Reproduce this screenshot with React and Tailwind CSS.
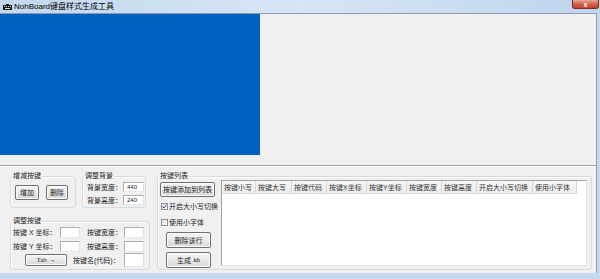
function Btn({ className = '', children }) {
  return (
    <div className={`flex items-center justify-center border border-[#707070] rounded-[2px] bg-linear-to-b from-[#f5f5f5] via-[#e8e8e8] to-[#d8d8d8] text-[7px] leading-none shadow-[inset_0_0_0_1px_#fcfcfc] ${className}`}>
      {children}
    </div>
  )
}

function Group({ title, className = '', children }) {
  return (
    <fieldset className={`border border-[#d3dce3] rounded-[3px] shadow-[inset_1px_1px_0_#fff] ${className}`}>
      <legend className="ml-[1px] px-[1px] text-[7px] leading-[8px]">{title}</legend>
      {children}
    </fieldset>
  )
}

function Input({ className = '', value }) {
  return (
    <div className={`border border-[#abadb3] border-b-[#e3e9ef] border-r-[#dbdfe6] bg-white flex items-center pl-[3px] text-[6px] font-['Liberation_Sans',sans-serif] ${className}`}>
      {value}
    </div>
  )
}

function Check({ checked, label, className = '' }) {
  return (
    <div className={`flex items-center text-[7px] leading-none ${className}`}>
      <div className="w-[7px] h-[7px] border border-[#8f8f8f] bg-linear-to-br from-[#dcdcdc] to-white flex items-center justify-center">
        {checked && (
          <svg width="5" height="5" viewBox="0 0 5 5">
            <path d="M0.5 2.5 L2 4 L4.5 0.8" fill="none" stroke="#2a4a8f" strokeWidth="1" />
          </svg>
        )}
      </div>
      <span className="ml-[1px]">{label}</span>
    </div>
  )
}

const columns = [
  ['按键小写', 34],
  ['按键大写', 36],
  ['按键代码', 35],
  ['按键X坐标', 40],
  ['按键Y坐标', 40],
  ['按键宽度', 35],
  ['按键高度', 35],
  ['开启大小写切换', 56],
  ['使用小字体', 44],
]

export default function App() {
  return (
    <div className="w-[600px] h-[279px] overflow-hidden bg-[#c4d9ef] flex flex-col font-['Liberation_Sans','Noto_Sans_CJK_SC',sans-serif] text-[#1b1b1b]">
      {/* title bar */}
      <div className="h-[13px] shrink-0 flex items-center bg-linear-to-r from-[#c2d8ef] via-[#d6e5f5] to-[#bed5ee]">
        <svg width="9" height="6" viewBox="0 0 9 6" className="ml-[3px] mt-[1px]">
          <rect x="0" y="1" width="9" height="5" fill="#1a1a1a" />
          <rect x="1" y="2" width="1" height="1" fill="#e0e0e0" />
          <rect x="3" y="2" width="1" height="1" fill="#e0e0e0" />
          <rect x="5" y="2" width="1" height="1" fill="#e0e0e0" />
          <rect x="7" y="2" width="1" height="1" fill="#e0e0e0" />
          <rect x="2" y="4" width="5" height="1" fill="#e0e0e0" />
          <rect x="3" y="0" width="3" height="1" fill="#1a1a1a" />
        </svg>
        <span className="ml-[2px] text-[8px] leading-none text-black">NohBoard键盘样式生成工具</span>
        <div className="ml-auto mr-[1px] self-start w-[27px] h-[9px] rounded-b-[3px] border border-t-0 border-[#7d2a1c] bg-linear-to-b from-[#e8a593] via-[#d2654b] to-[#c2432a] flex items-center justify-center">
          <span className="text-white text-[7px] leading-none font-bold">x</span>
        </div>
      </div>

      {/* client area */}
      <div className="w-[597px] h-[260px] shrink-0 bg-[#f0f0f0] border-t border-r border-[#8c9bb0] flex flex-col">
        <div className="h-[151px] shrink-0 flex">
          <div className="w-[260px] h-[141px] bg-[#0060c0]" />
        </div>
        <div className="h-[2px] shrink-0 border-t border-[#a0a0a0] border-b border-b-white" />

        <div className="flex-1 flex pt-[5px]">
          {/* left column */}
          <div className="ml-[10px] w-[140px] flex flex-col">
            <div className="flex">
              <Group title="增减按键" className="w-[66px] h-[36px]">
                <div className="flex mt-[5px] ml-[4px]">
                  <Btn className="w-[24px] h-[15px]">增加</Btn>
                  <Btn className="w-[22px] h-[15px] ml-[7px]">删除</Btn>
                </div>
              </Group>
              <Group title="调整背景" className="w-[64px] h-[36px] ml-[6px]">
                <div className="flex flex-col mt-[2px] ml-[4px]">
                  <div className="flex items-center h-[10px]">
                    <span className="w-[36px] text-[7px] leading-none">背景宽度：</span>
                    <Input className="w-[21px] h-[10px]" value="440" />
                  </div>
                  <div className="flex items-center h-[10px] mt-[3px]">
                    <span className="w-[36px] text-[7px] leading-none">背景高度：</span>
                    <Input className="w-[21px] h-[10px]" value="240" />
                  </div>
                </div>
              </Group>
            </div>
            <Group title="调整按键" className="w-[140px] h-[53px] mt-[9px]">
              <div className="flex flex-col ml-[2px]">
                <div className="flex items-center h-[11px] mt-[2px] text-[7px] leading-none">
                  <span className="w-[47px]">按键 X 坐标：</span>
                  <Input className="w-[20px] h-[11px]" />
                  <span className="w-[37px] ml-[7px]">按键宽度：</span>
                  <Input className="w-[20px] h-[11px]" />
                </div>
                <div className="flex items-center h-[11px] mt-[3px] text-[7px] leading-none">
                  <span className="w-[47px]">按键 Y 坐标：</span>
                  <Input className="w-[20px] h-[11px]" />
                  <span className="w-[37px] ml-[7px]">按键高度：</span>
                  <Input className="w-[20px] h-[11px]" />
                </div>
                <div className="flex items-center h-[14px] mt-[1px] text-[7px] leading-none">
                  <Btn className="w-[42px] h-[12px] ml-[12px] text-[6px] font-['Liberation_Serif',serif]">Tab →</Btn>
                  <span className="w-[51px] ml-[6px]">按键名(代码)：</span>
                  <Input className="w-[20px] h-[14px]" />
                </div>
              </div>
            </Group>
          </div>

          {/* key list */}
          <Group title="按键列表" className="w-[435px] h-[98px] ml-[7px]">
            <div className="flex">
              <div className="w-[63px] shrink-0 flex flex-col pl-[2px]">
                <Btn className="w-[55px] h-[15px] mt-[2px]">按键添加到列表</Btn>
                <Check checked label="开启大小写切换" className="mt-[6px] ml-[1px]" />
                <Check label="使用小字体" className="mt-[9px] ml-[1px]" />
                <Btn className="w-[45px] h-[16px] mt-[6px] ml-[6px]">删除该行</Btn>
                <Btn className="w-[45px] h-[16px] mt-[4px] ml-[6px]">
                  生成<span className="text-[6px] ml-[1px]">.kb</span>
                </Btn>
              </div>
              <div className="w-[366px] h-[86px] border border-[#a0a0a0] border-r-[#e3e3e3] border-b-[#e3e3e3] bg-white flex flex-col">
                <div className="h-[13px] flex">
                  {columns.map(([name, w]) => (
                    <div
                      key={name}
                      style={{ width: w }}
                      className="h-full shrink-0 flex items-center pl-[2px] text-[7px] leading-none text-[#333] bg-linear-to-b from-[#f7f7f7] to-[#ececec] border-r border-[#d5d5d5] border-b border-b-[#e0e0e0]"
                    >
                      {name}
                    </div>
                  ))}
                </div>
              </div>
            </div>
          </Group>
        </div>
      </div>
    </div>
  )
}
